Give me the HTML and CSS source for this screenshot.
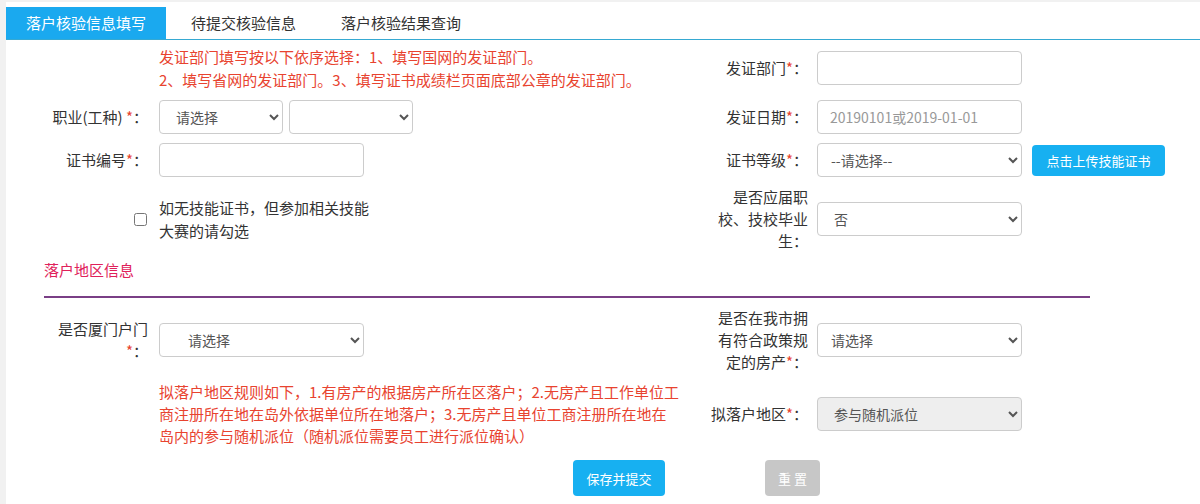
FILE: index.html
```html
<!DOCTYPE html>
<html lang="zh-CN">
<head>
<meta charset="utf-8">
<title>落户核验信息填写</title>
<link rel="stylesheet" href="styles.css">
</head>
<body>
<div class="page">
  <div class="tabs">
    <div class="tab active">落户核验信息填写</div>
    <div class="tab">待提交核验信息</div>
    <div class="tab">落户核验结果查询</div>
  </div>

  <form class="form">
    <div class="row">
      <div class="lbl"></div>
      <div class="cell">
        <p class="tip tip-top">发证部门填写按以下依序选择：1、填写国网的发证部门。<br>2、填写省网的发证部门。3、填写证书成绩栏页面底部公章的发证部门。</p>
      </div>
      <label class="lbl">发证部门<span class="req">*</span>：</label>
      <div class="cell2"><input class="ctl" type="text"></div>
      <div></div>
    </div>

    <div class="row row-gap">
      <label class="lbl">职业(工种) <span class="req">*</span>：</label>
      <div class="cell pair">
        <select class="ctl ctl-half pad-m"><option>请选择</option></select>
        <select class="ctl ctl-half pad-m"><option></option></select>
      </div>
      <label class="lbl">发证日期<span class="req">*</span>：</label>
      <div class="cell2"><input class="ctl" type="text" placeholder="20190101或2019-01-01"></div>
      <div></div>
    </div>

    <div class="row row-gap">
      <label class="lbl">证书编号<span class="req">*</span>：</label>
      <div class="cell"><input class="ctl" type="text"></div>
      <label class="lbl">证书等级<span class="req">*</span>：</label>
      <div class="cell2"><select class="ctl pad-s"><option>--请选择--</option></select></div>
      <div class="cell3"><button type="button" class="btn btn-upload">点击上传技能证书</button></div>
    </div>

    <div class="row row-gap">
      <div class="lbl"><input class="chk" type="checkbox"></div>
      <div class="cell"><p class="chk-text">如无技能证书，但参加相关技能<br>大赛的请勾选</p></div>
      <label class="lbl lbl-wrap">是否应届职校、技校毕业生：</label>
      <div class="cell2"><select class="ctl pad-m"><option>否</option></select></div>
      <div></div>
    </div>

    <div class="section">落户地区信息</div>

    <div class="row row-gap">
      <label class="lbl lbl-wrap">是否厦门户门<span class="req">*</span>：</label>
      <div class="cell"><select class="ctl pad-l"><option>请选择</option></select></div>
      <label class="lbl lbl-wrap">是否在我市拥有符合政策规定的房产<span class="req">*</span>：</label>
      <div class="cell2"><select class="ctl pad-s"><option>请选择</option></select></div>
      <div></div>
    </div>

    <div class="row row-gap-s">
      <div class="lbl"></div>
      <div class="cell">
        <p class="tip tip-bottom">拟落户地区规则如下，1.有房产的根据房产所在区落户；2.无房产且工作单位工<br>商注册所在地在岛外依据单位所在地落户；3.无房产且单位工商注册所在地在<br>岛内的参与随机派位（随机派位需要员工进行派位确认）</p>
      </div>
      <label class="lbl">拟落户地区<span class="req">*</span>：</label>
      <div class="cell2"><select class="ctl ctl-disabled pad-m"><option>参与随机派位</option></select></div>
      <div></div>
    </div>

    <div class="actions">
      <button type="button" class="btn btn-save">保存并提交</button>
      <button type="button" class="btn btn-reset">重 置</button>
    </div>
  </form>
</div>
</body>
</html>
```

FILE: styles.css
```css
* {
  box-sizing: border-box;
}

html, body {
  margin: 0;
  padding: 0;
}

body {
  background: #f1f1f1;
  font-family: "Noto Sans CJK SC", "Noto Sans", sans-serif;
  color: #333;
  font-size: 15px;
}

.page {
  margin: 2px 0 0 6px;
  min-height: 502px;
  background: #fff;
}

.tabs {
  display: flex;
  gap: 5px;
  padding-top: 5px;
  border-bottom: 1px solid #36a9d2;
}

.tab {
  height: 32px;
  line-height: 32px;
  padding: 0 20px;
  font-size: 15px;
  color: #333;
}

.tab.active {
  background: #1aa9ef;
  color: #fff;
}

.form {
  padding: 5px 0 0 38px;
  margin: 0;
}

.row {
  display: grid;
  grid-template-columns: 104px 570px 90px 214px 143px;
  align-items: center;
}

.row-gap {
  margin-top: 9px;
}

.row-gap-s {
  margin-top: 8px;
}

.lbl {
  justify-self: end;
  text-align: right;
  white-space: nowrap;
  font-size: 15px;
  line-height: 22px;
  color: #333;
}

.lbl-wrap {
  width: 90px;
  white-space: normal;
}

.req {
  color: #e8432f;
}

.cell {
  padding-left: 11px;
}

.cell2 {
  padding-left: 9px;
}

.cell3 {
  padding-left: 10px;
}

.pair {
  display: flex;
  gap: 6px;
}

.tip {
  margin: 0;
  color: #e8432f;
  font-size: 15px;
}

.tip-top {
  line-height: 23px;
}

.tip-bottom {
  line-height: 22px;
}

.ctl {
  display: block;
  width: 205px;
  height: 34px;
  margin: 0;
  border: 1px solid #cccccc;
  border-radius: 4px;
  background-color: #fff;
  font-family: "Noto Sans CJK SC", "Noto Sans", sans-serif;
  font-size: 14px;
  color: #555;
  padding: 0 12px;
}

.ctl::placeholder {
  color: #999;
}

.ctl-half {
  width: 124px;
}

.ctl-disabled {
  background-color: #eeeeee;
}

.pad-s {
  padding-left: 9px;
}

.pad-m {
  padding-left: 12px;
}

.pad-l {
  padding-left: 24px;
}

.chk {
  display: block;
  width: 13px;
  height: 13px;
  margin: 0 1px 0 0;
}

.chk-text {
  margin: 0;
  line-height: 23px;
  font-size: 15px;
  color: #333;
}

.section {
  width: 1046px;
  margin-top: 8px;
  padding-bottom: 16px;
  line-height: 20px;
  font-size: 15px;
  color: #e0215a;
  border-bottom: 2px solid #7a3f86;
}

.btn {
  border: none;
  border-radius: 4px;
  color: #fff;
  font-family: "Noto Sans CJK SC", "Noto Sans", sans-serif;
  font-size: 13px;
  padding: 0;
  cursor: pointer;
}

.btn-upload {
  width: 133px;
  height: 31px;
  background: #17b0f1;
}

.actions {
  display: flex;
  gap: 100px;
  margin-top: 13px;
  padding-left: 529px;
}

.btn-save {
  width: 92px;
  height: 36px;
  background: #17b0f1;
}

.btn-reset {
  width: 55px;
  height: 36px;
  background: #c7c7c7;
}
```
